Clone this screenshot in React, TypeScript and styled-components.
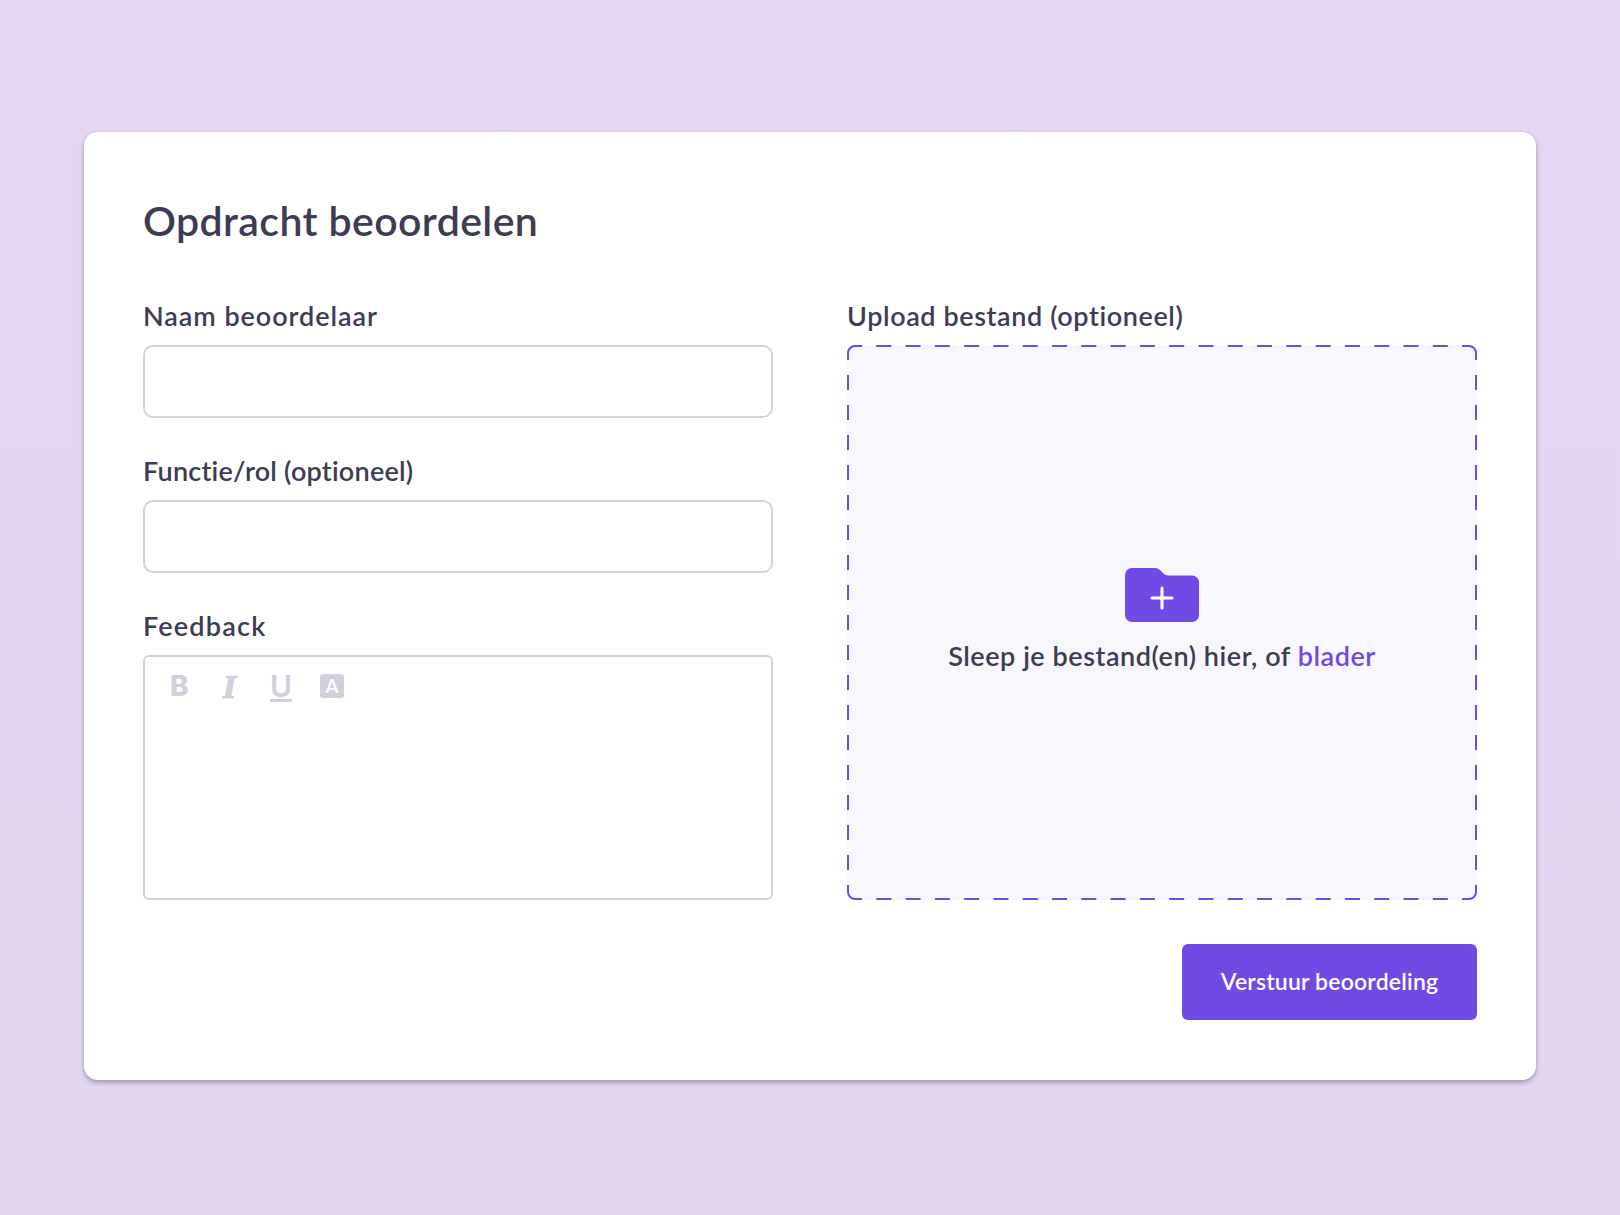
import React from "react";
import styled, { createGlobalStyle } from "styled-components";

const Global = createGlobalStyle`
  html, body { margin: 0; padding: 0; }
  body { font-family: "Lato", "Noto Sans", sans-serif; }
`;

const Page = styled.div`
  box-sizing: border-box;
  width: 1620px;
  height: 1215px;
  padding: 132px 84px 0;
  background: linear-gradient(180deg, #e5d7f3 0%, #e2d6f1 100%);
`;

const Card = styled.main`
  box-sizing: border-box;
  width: 1452px;
  height: 948px;
  padding: 64px 59px 60px;
  background: #ffffff;
  border-radius: 14px;
  box-shadow: 0 3px 5px rgba(70, 60, 90, 0.36), 0 0 3px rgba(70, 60, 90, 0.12);
  display: flex;
  flex-direction: column;
`;

const Title = styled.h1`
  margin: 0;
  height: 52px;
  font-size: 41px;
  line-height: 50px;
  font-weight: 600;
  letter-spacing: 0.4px;
  color: #3c3c54;
`;

const Columns = styled.div`
  display: grid;
  grid-template-columns: 630px 630px;
  column-gap: 74px;
  margin-top: 54px;
`;

const Column = styled.div`
  display: flex;
  flex-direction: column;
`;

const Field = styled.div`
  display: flex;
  flex-direction: column;
  & + & { margin-top: 37px; }
`;

const Label = styled.label<{ $track?: number }>`
  display: block;
  height: 32px;
  line-height: 32px;
  font-size: 27px;
  font-weight: 600;
  letter-spacing: ${(p) => p.$track ?? 0.6}px;
  color: #3c3c54;
  margin-bottom: 13px;
`;

const Input = styled.div`
  box-sizing: border-box;
  height: 73px;
  background: #fff;
  border: 2px solid #d3d1de;
  border-radius: 10px;
`;

const Editor = styled.div`
  box-sizing: border-box;
  height: 245px;
  background: #fff;
  border: 2px solid #d3d1de;
  border-radius: 6px;
  padding: 17px 0 0 25px;
`;

const Toolbar = styled.div`
  display: flex;
  align-items: flex-start;
  color: #d1cfdc;
`;

const Tool = styled.span`
  width: 50px;
  height: 24px;
  display: flex;
  align-items: center;
  justify-content: flex-start;
  line-height: 24px;
`;

const BoldGlyph = styled.b`
  font-family: "Inter", sans-serif;
  font-weight: 800;
  font-size: 28px;
`;

const ItalicGlyph = styled.i`
  font-family: "DejaVu Serif", serif;
  font-weight: 700;
  font-style: italic;
  font-size: 29px;
  margin: 3px 0 0 3px;
  -webkit-text-stroke: 0.7px #d1cfdc;
`;

const UnderGlyph = styled.span`
  display: block;
  font-family: "Inter", sans-serif;
  font-size: 30px;
  font-weight: 600;
  line-height: 26px;
  height: 26px;
  width: 22px;
  text-align: center;
  border-bottom: 3px solid #d1cfdc;
  margin-top: 3px;
`;

const BoxGlyph = styled.span`
  width: 24px;
  height: 24px;
  background: #d1cfdc;
  border-radius: 3px;
  color: #fff;
  font-size: 19px;
  font-weight: 600;
  line-height: 23px;
  text-align: center;
`;

const Drop = styled.div`
  position: relative;
  box-sizing: border-box;
  height: 555px;
  background: #f8f6fe;
  border-radius: 8px;
  display: flex;
  flex-direction: column;
  align-items: center;
  padding-top: 223px;
`;

const DashOutline = styled.svg`
  position: absolute;
  left: 0;
  top: 0;
  pointer-events: none;
`;

const FolderIcon = styled.svg`
  display: block;
`;

const DropText = styled.p`
  margin: 18px 0 0;
  font-size: 27px;
  line-height: 32px;
  font-weight: 600;
  letter-spacing: 0.55px;
  color: #3c3c54;
`;

const BrowseLink = styled.span`
  color: #7149e6;
`;

const Footer = styled.div`
  display: flex;
  justify-content: flex-end;
  margin-top: 44px;
`;

const Submit = styled.button`
  width: 295px;
  height: 76px;
  border: 0;
  border-radius: 6px;
  background: #714ae6;
  color: #fff;
  font-family: inherit;
  font-size: 23px;
  font-weight: 600;
  letter-spacing: 0.2px;
  padding: 0 0 3px;
`;

export default function App() {
  return (
    <>
      <Global />
      <Page>
        <Card>
          <Title>Opdracht beoordelen</Title>
          <Columns>
            <Column>
              <Field>
                <Label $track={0.95}>Naam beoordelaar</Label>
                <Input />
              </Field>
              <Field>
                <Label $track={0.24}>Functie/rol (optioneel)</Label>
                <Input />
              </Field>
              <Field>
                <Label $track={1.2}>Feedback</Label>
                <Editor>
                  <Toolbar>
                    <Tool><BoldGlyph>B</BoldGlyph></Tool>
                    <Tool><ItalicGlyph>I</ItalicGlyph></Tool>
                    <Tool><UnderGlyph>U</UnderGlyph></Tool>
                    <Tool><BoxGlyph>A</BoxGlyph></Tool>
                  </Toolbar>
                </Editor>
              </Field>
            </Column>
            <Column>
              <Field>
                <Label>Upload bestand (optioneel)</Label>
                <Drop>
                  <DashOutline width="630" height="555" viewBox="0 0 630 555" fill="none" stroke="#7149e6" strokeWidth="2">
                    <path d="M1 8A7 7 0 0 1 8 1M622 1A7 7 0 0 1 629 8M629 547A7 7 0 0 1 622 554M8 554A7 7 0 0 1 1 547" />
                    <path d="M8 1H622M8 554H622" strokeDasharray="15 14.29" strokeDashoffset="8" />
                    <path d="M1 8V547M629 8V547" strokeDasharray="15 15" strokeDashoffset="8" />
                  </DashOutline>
                  <FolderIcon width="74" height="54" viewBox="0 0 74 54">
                    <path d="M0 7a7 7 0 0 1 7-7h23a7 7 0 0 1 5 2l3.5 3.5a6 6 0 0 0 4.5 2H67a7 7 0 0 1 7 7V47a7 7 0 0 1-7 7H7a7 7 0 0 1-7-7Z" fill="#714ae6" />
                    <path d="M37 20v20M27 30h20" stroke="#fff" strokeWidth="3" strokeLinecap="round" />
                  </FolderIcon>
                  <DropText>
                    Sleep je bestand(en) hier, of <BrowseLink>blader</BrowseLink>
                  </DropText>
                </Drop>
              </Field>
            </Column>
          </Columns>
          <Footer>
            <Submit>Verstuur beoordeling</Submit>
          </Footer>
        </Card>
      </Page>
    </>
  );
}
